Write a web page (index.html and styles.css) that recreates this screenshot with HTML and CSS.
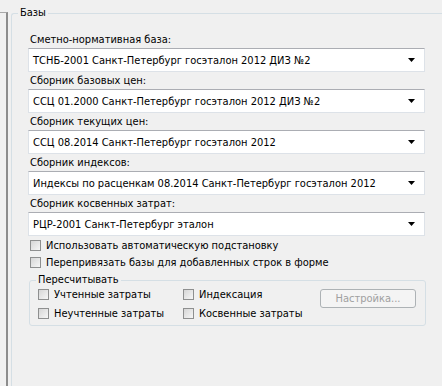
FILE: index.html
```html
<!DOCTYPE html>
<html lang="ru">
<head>
    <meta charset="UTF-8">
    <title>Базы</title>
    <link rel="stylesheet" href="styles.css">
</head>
<body>
    <div class="window">
        <div class="side"></div>

        <!-- Группа "Базы" -->
        <fieldset class="group bases">
            <legend>Базы</legend>
            <div class="bases-body">
                <div class="field">
                    <div class="field-label">Сметно-нормативная база:</div>
                    <div class="combo"><span>ТСНБ-2001 Санкт-Петербург госэталон 2012 ДИЗ №2</span><svg class="arrow" width="7" height="4" viewBox="0 0 7 4"><polygon points="0,0 7,0 3.5,4" /></svg></div>
                </div>
                <div class="field">
                    <div class="field-label">Сборник базовых цен:</div>
                    <div class="combo"><span>ССЦ 01.2000 Санкт-Петербург госэталон 2012 ДИЗ №2</span><svg class="arrow" width="7" height="4" viewBox="0 0 7 4"><polygon points="0,0 7,0 3.5,4" /></svg></div>
                </div>
                <div class="field">
                    <div class="field-label">Сборник текущих цен:</div>
                    <div class="combo"><span>ССЦ 08.2014 Санкт-Петербург госэталон 2012</span><svg class="arrow" width="7" height="4" viewBox="0 0 7 4"><polygon points="0,0 7,0 3.5,4" /></svg></div>
                </div>
                <div class="field">
                    <div class="field-label">Сборник индексов:</div>
                    <div class="combo"><span>Индексы по расценкам 08.2014 Санкт-Петербург госэталон 2012</span><svg class="arrow" width="7" height="4" viewBox="0 0 7 4"><polygon points="0,0 7,0 3.5,4" /></svg></div>
                </div>
                <div class="field">
                    <div class="field-label">Сборник косвенных затрат:</div>
                    <div class="combo"><span>РЦР-2001 Санкт-Петербург эталон</span><svg class="arrow" width="7" height="4" viewBox="0 0 7 4"><polygon points="0,0 7,0 3.5,4" /></svg></div>
                </div>

                <div class="check-list">
                    <div class="check"><span class="box"></span>Использовать автоматическую подстановку</div>
                    <div class="check"><span class="box"></span>Перепривязать базы для добавленных строк в форме</div>
                </div>

                <!-- Группа "Пересчитывать" -->
                <fieldset class="group recalc">
                    <legend>Пересчитывать</legend>
                    <div class="recalc-grid">
                        <div class="check"><span class="box"></span>Учтенные затраты</div>
                        <div class="check"><span class="box"></span>Индексация</div>
                        <div class="button disabled">Настройка...</div>
                        <div class="check"><span class="box"></span>Неучтенные затраты</div>
                        <div class="check"><span class="box"></span>Косвенные затраты</div>
                    </div>
                </fieldset>
            </div>
        </fieldset>
    </div>
</body>
</html>
```

FILE: styles.css
```css
/* Global */
body {
    margin: 0;
    height: 100vh;
    overflow: hidden;
    background: #f0f0f0;
    color: #000;
    font-family: "DejaVu Sans Condensed", "DejaVu Sans", sans-serif;
    font-size: 11px;
}

.window {
    display: flex;
    height: 100%;
}

/* Край соседней панели слева */
.side {
    flex: none;
    width: 6px;
    margin-top: 12px;
    border-top: 1px solid #a8a8a8;
    border-right: 2px solid #8c8c8c;
}

/* Group boxes */
.group {
    margin: 0;
    padding: 0;
    border: 1px solid #d5dfe5;
    border-radius: 3px;
    min-width: 0;
}

.group legend {
    padding: 0 2px;
    line-height: 14px;
}

/* right and bottom edges of this box are outside the window */
.bases {
    flex: 1;
    margin: 6px 0 0 3px;
    border-right: none;
    border-bottom: none;
    border-radius: 3px 0 0 0;
}

.bases legend {
    margin-left: 6px;
}

.bases-body {
    padding: 11px 0 0 16px;
}

/* Labels + combo boxes */
.field-label {
    line-height: 17px;
    padding-left: 2px;
}

.combo {
    display: flex;
    align-items: center;
    justify-content: space-between;
    box-sizing: border-box;
    width: 397px;
    height: 24px;
    padding: 0 9px 0 4px;
    background: #fff;
    border: 1px solid #dde2e8;
    border-top-color: #abadb3;
}

.arrow {
    fill: #000;
}

/* Checkboxes */
.check-list {
    padding: 1px 0 0 2px;
}

.check {
    display: flex;
    align-items: center;
    gap: 5px;
    height: 17px;
    white-space: nowrap;
}

.box {
    flex: none;
    box-sizing: border-box;
    width: 11px;
    height: 11px;
    border: 1px solid #8e8f8f;
    background: linear-gradient(135deg, #d6d6d6, #f6f6f6);
}

/* Группа "Пересчитывать" */
.recalc {
    width: 397px;
    box-sizing: border-box;
    margin: 3px 0 0 1px;
}

.recalc legend {
    margin-left: 6px;
    line-height: 12px;
}

.recalc-grid {
    display: grid;
    grid-template-columns: 145px 137px 96px;
    grid-template-rows: 17px 17px;
    row-gap: 2px;
    padding: 0 0 3px 8px;
}

.button {
    grid-column: 3;
    grid-row: 1 / 3;
    align-self: start;
    margin-top: 3px;
    height: 19px;
    box-sizing: border-box;
    border: 1px solid #adb2b5;
    border-radius: 3px;
    background: #f4f4f4;
    text-align: center;
    line-height: 17px;
}

.button.disabled {
    color: #a0a0a0;
}
```
